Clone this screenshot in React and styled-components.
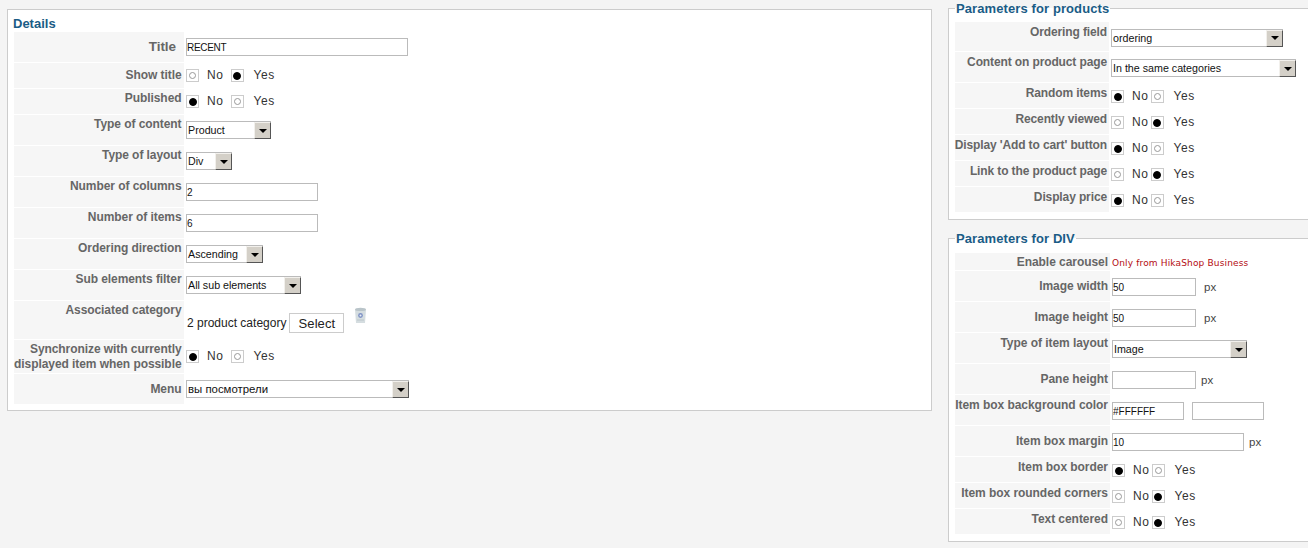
import React from "react";
import styled, { createGlobalStyle } from "styled-components";

const GlobalStyle = createGlobalStyle`
  html, body {
    margin: 0;
    height: 548px;
    overflow: hidden;
    background: #f4f4f4;
    font-family: "Liberation Sans", Arial, sans-serif;
  }
`;

const Page = styled.div`
  display: flex;
  align-items: flex-start;
  width: 1308px;
  height: 548px;
  padding-left: 7px;
  box-sizing: border-box;
  overflow: hidden;
`;

const DetailsPanel = styled.div`
  flex: none;
  width: 925px;
  margin-top: 9px;
  padding: 4px 6px 6px;
  box-sizing: border-box;
  background: #fff;
  border: 1px solid #ccc;
`;

const SideColumn = styled.div`
  flex: none;
  width: 380px;
  margin-left: 16px;
  display: flex;
  flex-direction: column;
  gap: 10px;
`;

const Fieldset = styled.fieldset`
  margin: 0;
  padding: ${({ $top }) => $top}px 6px 7px;
  min-width: 0;
  background: #fff;
  border: 1px solid #ccc;
`;

const Legend = styled.legend`
  padding: 2px 1px 0;
  font-size: 13px;
  line-height: 14px;
  letter-spacing: 0.1px;
  font-weight: bold;
  color: #1a5c86;
`;

const DetailsTitle = styled.h3`
  margin: 0 0 0 -1px;
  height: 18px;
  padding-top: 1px;
  box-sizing: border-box;
  font-size: 13px;
  line-height: 18px;
  font-weight: bold;
  color: #1a5c86;
`;

const Rows = styled.div`
  display: flex;
  flex-direction: column;
  gap: 1px;
`;

const Row = styled.div`
  display: flex;
  height: ${({ $h }) => $h}px;
`;

const Label = styled.div`
  flex: none;
  width: ${({ $w }) => $w}px;
  box-sizing: border-box;
  padding-right: ${({ $big, $pad }) => ($big ? 8 : $pad)}px;
  padding-top: ${({ $middle, $shift }) => ($middle ? 0 : 2) + $shift}px;
  padding-bottom: ${({ $big }) => ($big ? 2 : 0)}px;
  display: flex;
  justify-content: flex-end;
  align-items: ${({ $middle }) => ($middle ? "center" : "flex-start")};
  background: #f6f6f6;
  color: #666;
  font-size: ${({ $big }) => ($big ? 13.5 : 12)}px;
  letter-spacing: ${({ $tracking }) => $tracking}px;
  line-height: 15px;
  font-weight: bold;
  text-align: right;
  white-space: nowrap;
`;

const Value = styled.div`
  flex: 1;
  display: flex;
  align-items: center;
  padding-left: 2px;
  padding-top: ${({ $shift }) => $shift * 2}px;
  color: #222;
  font-size: 12px;
`;

const TextBox = styled.div`
  flex: none;
  width: ${({ $w }) => $w}px;
  height: 18px;
  box-sizing: border-box;
  padding: 1px 0 0;
  background: #fff;
  border: 1px solid #bbb;
  color: #111;
  font-size: 10px;
  letter-spacing: ${({ $tight }) => ($tight ? -0.3 : 0)}px;
  line-height: 15px;
  overflow: hidden;
`;

const Suffix = styled.span`
  margin-left: ${({ $gap }) => $gap}px;
  color: #444;
  font-size: 11.5px;
`;

const Dropdown = styled.div`
  flex: none;
  position: relative;
  width: ${({ $w }) => $w}px;
  height: 18px;
  box-sizing: border-box;
  padding: 1px 18px 0 1px;
  background: #fff;
  border: 1px solid #bbb;
  color: #111;
  font-size: ${({ $size }) => $size || 10.7}px;
  line-height: 15px;
  white-space: nowrap;
`;

const DropArrow = styled.span`
  position: absolute;
  top: 0;
  right: -1px;
  bottom: -1px;
  width: 17px;
  box-sizing: border-box;
  display: flex;
  align-items: center;
  justify-content: center;
  background: #d4d0c8;
  border: 1px solid;
  border-color: #f2f0ec #555 #555 #f2f0ec;

  &::after {
    content: "";
    border-style: solid;
    border-width: 4px 4px 0;
    border-color: #000 transparent transparent;
  }
`;

const RadioBox = styled.span`
  flex: none;
  width: 13px;
  height: 13px;
  box-sizing: border-box;
  display: flex;
  align-items: center;
  justify-content: center;
  background: #fff;
  border: 1px solid #ccc;

  &::after {
    content: "";
    box-sizing: border-box;
    width: ${({ $on }) => ($on ? 8 : 7)}px;
    height: ${({ $on }) => ($on ? 8 : 7)}px;
    border-radius: 50%;
    background: ${({ $on }) => ($on ? "#000" : "#fff")};
    border: 1px solid ${({ $on }) => ($on ? "#000" : "#999")};
  }
`;

const RadioText = styled.span`
  flex: none;
  margin-left: ${({ $before }) => $before}px;
  margin-right: ${({ $after }) => $after || 0}px;
  margin-top: -1px;
  color: #333;
  font-size: 12px;
  letter-spacing: 0.6px;
`;

const Notice = styled.span`
  color: #b40c12;
  font-family: "DejaVu Sans", sans-serif;
  font-size: 9px;
  letter-spacing: 0.15px;
`;

const CategoryText = styled.span`
  margin: 6px 0 0 1px;
  color: #222;
  font-size: 12px;
`;

const SelectButton = styled.button`
  width: 55px;
  height: 20px;
  margin: 6px 0 0 3px;
  padding: 0;
  background: #fff;
  border: 1px solid #ccc;
  color: #222;
  font-family: inherit;
  font-size: 13px;
  letter-spacing: 0.1px;
`;

const TrashIcon = styled.svg`
  margin: -10px 0 0 10px;
`;

const Radios = ({ on, after }) => (
  <>
    <RadioBox $on={on === "no"} />
    <RadioText $before={8} $after={after}>No</RadioText>
    <RadioBox $on={on === "yes"} />
    <RadioText $before={10}>Yes</RadioText>
  </>
);

const Select = ({ w, size, children }) => (
  <Dropdown $w={w} $size={size}>
    {children}
    <DropArrow />
  </Dropdown>
);

const Trash = () => (
  <TrashIcon width="13" height="17" viewBox="0 0 13 17">
    <path d="M1 2.5h11l-1 13.5H2z" fill="#d5dde0" />
    <ellipse cx="6.5" cy="2.4" rx="5.5" ry="1.6" fill="#b9c4c9" />
    <circle cx="6.5" cy="8.5" r="2.4" fill="#7f93c4" />
    <circle cx="6.5" cy="8.5" r="1" fill="#e8ecf5" />
    <path d="M3 13h7" stroke="#bcc6ca" />
  </TrashIcon>
);

const details = [
  { label: "Title", h: 30, middle: true, big: true, value: <TextBox $w={222} $tight>RECENT</TextBox> },
  { label: "Show title", h: 25, middle: true, value: <Radios on="yes" after={7} /> },
  { label: "Published", h: 25, value: <Radios on="no" after={7} /> },
  { label: "Type of content", h: 30, value: <Select w={85}>Product</Select> },
  { label: "Type of layout", h: 30, value: <Select w={46}>Div</Select> },
  { label: "Number of columns", h: 30, value: <TextBox $w={132}>2</TextBox> },
  { label: "Number of items", h: 30, value: <TextBox $w={132}>6</TextBox> },
  { label: "Ordering direction", h: 30, value: <Select w={77}>Ascending</Select> },
  { label: "Sub elements filter", h: 30, value: <Select w={115}>All sub elements</Select> },
  {
    label: "Associated category",
    h: 38,
    value: (
      <>
        <CategoryText>2 product category</CategoryText>
        <SelectButton>Select</SelectButton>
        <Trash />
      </>
    ),
  },
  {
    label: (
      <span>
        Synchronize with currently
        <br />
        displayed item when possible
      </span>
    ),
    h: 33,
    value: <Radios on="no" after={7} />,
  },
  { label: "Menu", h: 30, middle: true, value: <Select w={223} size={11.4}>вы посмотрели</Select> },
];

const products = [
  { label: "Ordering field", h: 29, value: <Select w={172}>ordering</Select> },
  { label: "Content on product page", h: 30, value: <Select w={185}>In the same categories</Select> },
  { label: "Random items", h: 25, value: <Radios on="no" after={2} /> },
  { label: "Recently viewed", h: 25, value: <Radios on="yes" after={2} /> },
  { label: "Display 'Add to cart' button", h: 25, value: <Radios on="no" after={2} /> },
  { label: "Link to the product page", h: 25, value: <Radios on="yes" after={2} /> },
  { label: "Display price", h: 25, value: <Radios on="no" after={2} /> },
];

const div = [
  { label: "Enable carousel", h: 17, middle: true, value: <Notice>Only from HikaShop Business</Notice> },
  {
    label: "Image width",
    h: 30,
    middle: true,
    value: (
      <>
        <TextBox $w={84}>50</TextBox>
        <Suffix $gap={8}>px</Suffix>
      </>
    ),
  },
  {
    label: "Image height",
    h: 30,
    middle: true,
    value: (
      <>
        <TextBox $w={84}>50</TextBox>
        <Suffix $gap={8}>px</Suffix>
      </>
    ),
  },
  { label: "Type of item layout", h: 30, value: <Select w={135}>Image</Select> },
  {
    label: "Pane height",
    h: 30,
    middle: true,
    value: (
      <>
        <TextBox $w={84} />
        <Suffix $gap={5}>px</Suffix>
      </>
    ),
  },
  {
    label: "Item box background color",
    h: 30,
    value: (
      <>
        <TextBox $w={72}>#FFFFFF</TextBox>
        <Suffix $gap={8} />
        <TextBox $w={72} />
      </>
    ),
  },
  {
    label: "Item box margin",
    h: 30,
    middle: true,
    value: (
      <>
        <TextBox $w={132}>10</TextBox>
        <Suffix $gap={5}>px</Suffix>
      </>
    ),
  },
  { label: "Item box border", h: 25, value: <Radios on="no" after={2} /> },
  { label: "Item box rounded corners", h: 25, value: <Radios on="yes" after={2} /> },
  { label: "Text centered", h: 25, value: <Radios on="yes" after={2} /> },
];

const FormRows = ({ items, labelWidth, pad, shift, tracking }) => (
  <Rows>
    {items.map((item, i) => (
      <Row key={i} $h={item.h}>
        <Label
          $w={labelWidth}
          $middle={item.middle}
          $big={item.big}
          $pad={pad}
          $shift={shift}
          $tracking={tracking}
        >
          {item.label}
        </Label>
        <Value $shift={shift}>{item.value}</Value>
      </Row>
    ))}
  </Rows>
);

export default function App() {
  return (
    <Page>
      <GlobalStyle />
      <DetailsPanel>
        <DetailsTitle>Details</DetailsTitle>
        <FormRows items={details} labelWidth={170} pad={2.5} shift={0} tracking={-0.07} />
      </DetailsPanel>
      <SideColumn>
        <Fieldset $top={6}>
          <Legend>Parameters for products</Legend>
          <FormRows items={products} labelWidth={154} pad={2} shift={1} tracking={-0.12} />
        </Fieldset>
        <Fieldset $top={7}>
          <Legend>Parameters for DIV</Legend>
          <FormRows items={div} labelWidth={155} pad={2} shift={1} tracking={-0.05} />
        </Fieldset>
      </SideColumn>
    </Page>
  );
}
